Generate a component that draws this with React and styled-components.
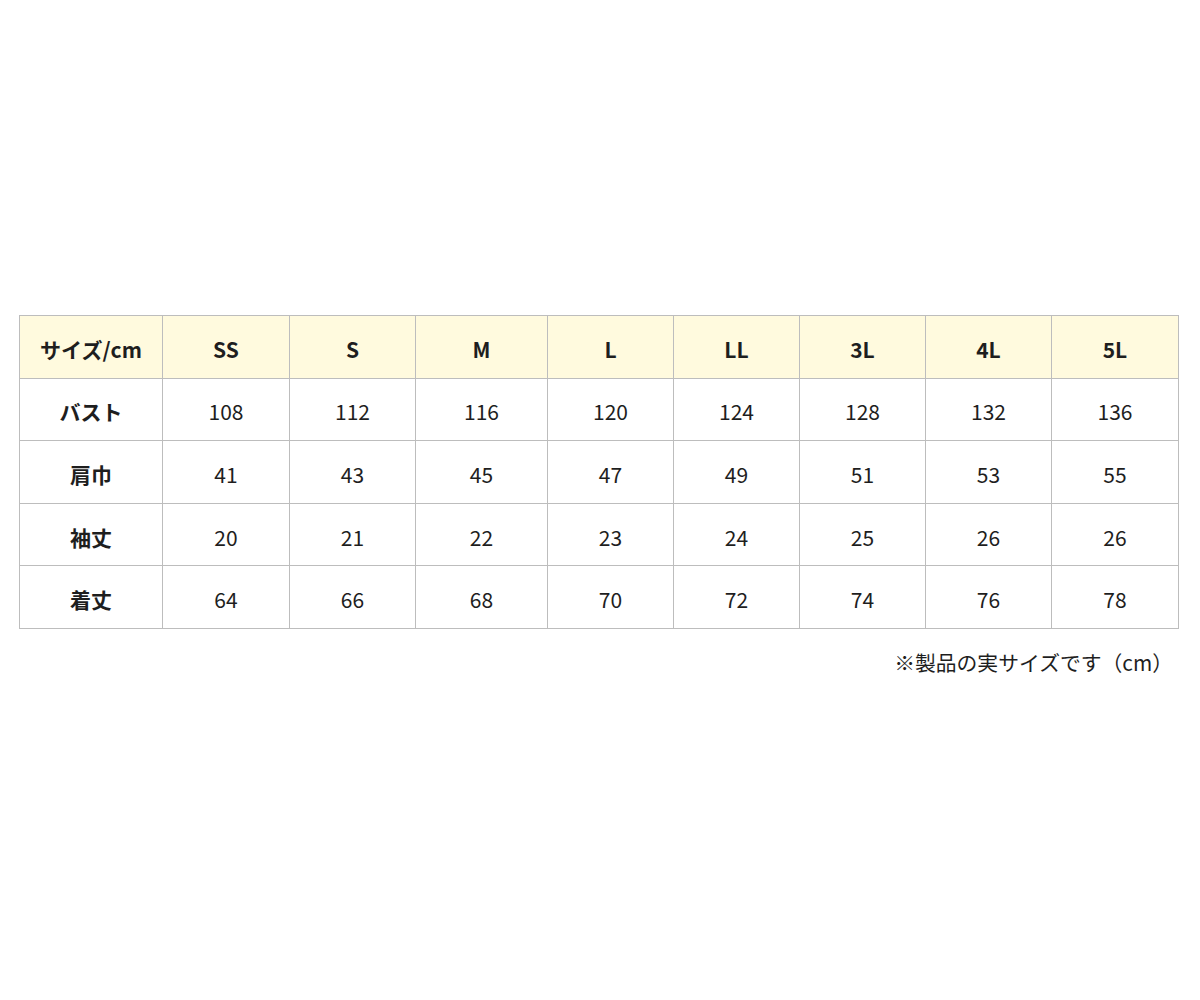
import React from "react";
import styled, { createGlobalStyle } from "styled-components";

const Global = createGlobalStyle`
  html, body { margin: 0; padding: 0; background: #fff; }
  body { font-family: "Noto Sans CJK JP", "Noto Sans", sans-serif; color: #1e1e1e; }
`;

const Page = styled.div`
  width: 1200px;
  height: 1000px;
  box-sizing: border-box;
  padding: 315px 21px 0 19px;
`;

const Table = styled.table`
  width: 1159px;
  table-layout: fixed;
  border-collapse: collapse;
  font-size: 21px;
`;

const Cell = styled.td`
  height: 62.6px;
  padding: 5px 0 0;
  box-sizing: border-box;
  border: 1px solid #bdbdbd;
  text-align: center;
  vertical-align: middle;
  font-weight: ${(p) => (p.$bold ? 700 : 400)};
  background: ${(p) => (p.$head ? "#fffade" : "#fff")};
  color: #1e1e1e;
  line-height: 1;
`;

const Note = styled.p`
  margin: 19px 6px 0 0;
  text-align: right;
  font-size: 20.8px;
  color: #1e1e1e;
  line-height: 1.4;
`;

const widths = [143, 127, 126, 132, 126, 126, 126, 126, 127];
const header = ["サイズ/cm", "SS", "S", "M", "L", "LL", "3L", "4L", "5L"];
const rows = [
  ["バスト", 108, 112, 116, 120, 124, 128, 132, 136],
  ["肩巾", 41, 43, 45, 47, 49, 51, 53, 55],
  ["袖丈", 20, 21, 22, 23, 24, 25, 26, 26],
  ["着丈", 64, 66, 68, 70, 72, 74, 76, 78],
];

export default function App() {
  return (
    <>
      <Global />
      <Page>
        <Table>
          <colgroup>
            {widths.map((w, i) => (
              <col key={i} style={{ width: w }} />
            ))}
          </colgroup>
          <tbody>
            <tr>
              {header.map((h) => (
                <Cell key={h} $head $bold>
                  {h}
                </Cell>
              ))}
            </tr>
            {rows.map((r) => (
              <tr key={r[0]}>
                {r.map((v, i) => (
                  <Cell key={i} $bold={i === 0}>
                    {v}
                  </Cell>
                ))}
              </tr>
            ))}
          </tbody>
        </Table>
        <Note>※製品の実サイズです（cm）</Note>
      </Page>
    </>
  );
}
